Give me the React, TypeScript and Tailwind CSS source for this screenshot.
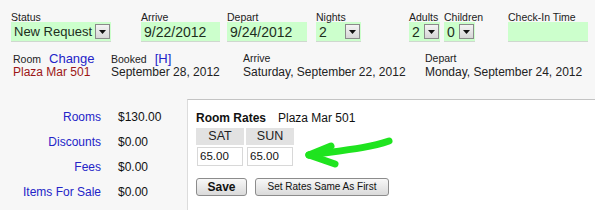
import React from 'react';

const font = { fontFamily: '"Liberation Sans", Arial, sans-serif' };

const DropButton = () => (
  <span className="flex h-[15px] w-[15px] shrink-0 items-center justify-center border border-[#8a8a8a] bg-gradient-to-b from-[#f4f4f4] to-[#d6d6d6]">
    <svg width="7" height="4" viewBox="0 0 7 4">
      <path d="M0 0h7L3.5 4z" fill="#111" />
    </svg>
  </span>
);

interface FieldProps {
  label: string;
  value?: string;
  fieldWidth: string;
  colWidth: string;
  select?: boolean;
  textSize?: string;
}

const Field = ({ label, value, fieldWidth, colWidth, select, textSize = 'text-[14px]' }: FieldProps) => (
  <div className={`${colWidth} shrink-0`}>
    <div className="h-[11px] text-[10.5px] leading-[12px] text-[#222]">{label}</div>
    <div
      className={`${fieldWidth} flex h-[20px] items-center justify-between border-b border-[#cfd8cf] bg-[#ccffcc] pl-[3px] pr-[1px] text-[#1d2e1d] ${textSize} leading-[20px]`}
    >
      <span>{value}</span>
      {select && <DropButton />}
    </div>
  </div>
);

const Info = ({ label, value, link, width, valueClass = 'text-[#222]' }: { label: string; value: string; link?: string; width: string; valueClass?: string }) => (
  <div className={`${width} shrink-0`}>
    <div className="flex h-[13px] items-baseline gap-[8px] leading-[13px]">
      <span className="text-[10.5px] text-[#222]">{label}</span>
      {link && <span className="text-[13px] text-[#2424c8]">{link}</span>}
    </div>
    <div className={`text-[12px] leading-[15px] ${valueClass}`}>{value}</div>
  </div>
);

const Btn = ({ children, className }: { children: React.ReactNode; className: string }) => (
  <button className={`h-[18px] rounded-[3px] border border-[#8c8c8c] bg-gradient-to-b from-[#f8f8f8] to-[#dadada] text-[#111] leading-[16px] ${className}`}>
    {children}
  </button>
);

export default function App() {
  const totals = [
    ['Rooms', '$130.00'],
    ['Discounts', '$0.00'],
    ['Fees', '$0.00'],
    ['Items For Sale', '$0.00'],
  ];

  return (
    <div className="flex h-[210px] w-[595px] flex-col overflow-hidden bg-[#f7f7f7]" style={font}>
      <div className="h-[99px] shrink-0">
        <div className="flex pl-[11px] pt-[11px]">
          <Field label="Status" value="New Request" colWidth="w-[130px]" fieldWidth="w-[100px]" select textSize="text-[13px]" />
          <Field label="Arrive" value="9/22/2012" colWidth="w-[86px]" fieldWidth="w-[79px]" />
          <Field label="Depart" value="9/24/2012" colWidth="w-[89px]" fieldWidth="w-[80px]" />
          <Field label="Nights" value="2" colWidth="w-[93px]" fieldWidth="w-[45px]" select />
          <Field label="Adults" value="2" colWidth="w-[35px]" fieldWidth="w-[31px]" select />
          <Field label="Children" value="0" colWidth="w-[64px]" fieldWidth="w-[31px]" select />
          <Field label="Check-In Time" colWidth="w-[80px]" fieldWidth="w-[80px]" />
        </div>
        <div className="mt-[10px] flex pl-[13px]">
          <Info label="Room" link="Change" value="Plaza Mar 501" width="w-[98px]" valueClass="text-[#9c1616]" />
          <Info label="Booked" link="[H]" value="September 28, 2012" width="w-[132px]" />
          <Info label="Arrive" value="Saturday, September 22, 2012" width="w-[182px]" />
          <Info label="Depart" value="Monday, September 24, 2012" width="w-[170px]" />
        </div>
      </div>

      <div className="flex flex-1">
        <div className="grid w-[187px] shrink-0 grid-cols-[101px_1fr] content-start gap-x-[17px] pt-[6px] text-[12px] leading-[25px]">
          {totals.map(([k, v]) => (
            <React.Fragment key={k}>
              <span className="text-right text-[#2424c8]">{k}</span>
              <span className="text-[#111]">{v}</span>
            </React.Fragment>
          ))}
        </div>

        <div className="relative flex-1 border-l border-t border-[#c4c4c4] border-l-[#dcdcdc] bg-white pl-[8px] pt-[11px]">
          <div className="flex h-[14px] items-baseline gap-[12px] text-[12px] leading-[14px] text-[#111]">
            <span className="font-bold">Room Rates</span>
            <span>Plaza Mar 501</span>
          </div>
          <div className="mt-[3px] flex gap-[2px]">
            {['SAT', 'SUN'].map((d) => (
              <div key={d} className="flex w-[48px] flex-col gap-[2px]">
                <div className="h-[17px] bg-[#e2e2e2] text-center text-[12.5px] leading-[17px] text-[#222]">{d}</div>
                <div className="ml-[1px] h-[19px] w-[46px] border border-[#d8d8d8] bg-white pl-[2px] text-[11.5px] leading-[17px] text-[#111]">
                  65.00
                </div>
              </div>
            ))}
          </div>
          <div className="mt-[12px] flex gap-[8px]">
            <Btn className="w-[51px] text-[12px] font-bold">Save</Btn>
            <Btn className="w-[134px] text-[10px]">Set Rates Same As First</Btn>
          </div>

          <svg className="absolute left-0 top-0" width="408" height="111" viewBox="187 99 408 111">
            <g stroke="#1fe41f" strokeWidth="7" strokeLinecap="round" strokeLinejoin="round" fill="none">
              <path d="M388 140 C368 147 345 149 308 154" />
              <path d="M308 154 L330 145" />
              <path d="M308 154 L334 163" />
            </g>
          </svg>
        </div>
      </div>
    </div>
  );
}
